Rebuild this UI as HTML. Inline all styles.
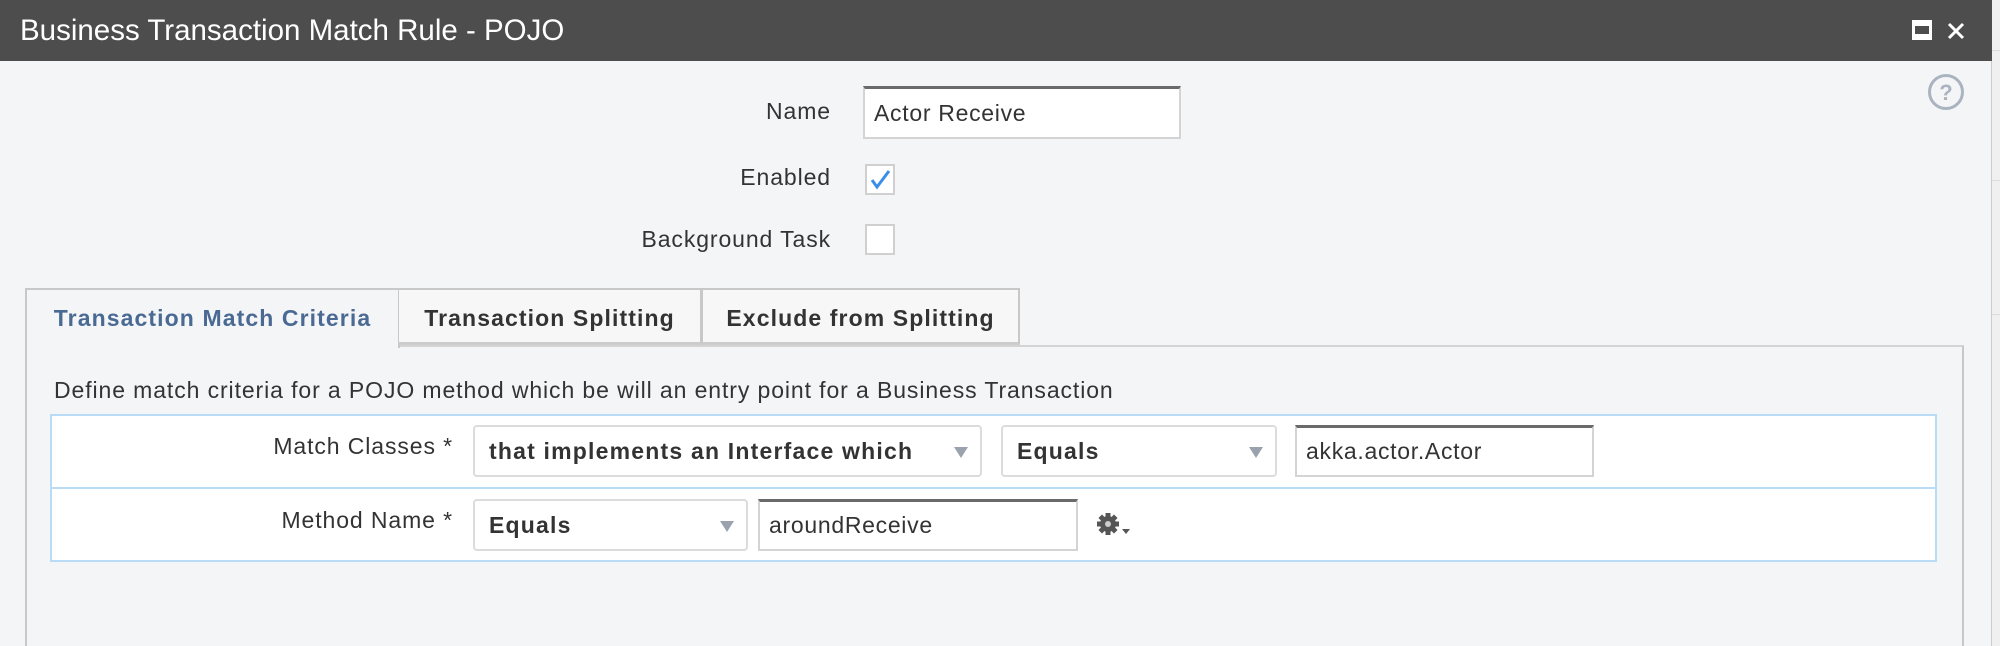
<!DOCTYPE html>
<html><head><meta charset="utf-8"><style>
*{box-sizing:border-box;margin:0;padding:0}
body{width:2000px;height:646px;overflow:hidden;background:#f0f0f0;font-family:"Liberation Sans",sans-serif;color:#333;position:relative}
.abs{position:absolute}
#dlg{left:0;top:0;width:1992px;height:646px;background:#f4f5f7;border-right:1px solid #ccc}
#title{left:0;top:0;width:1992px;height:61px;background:#4d4d4d;color:#fff;font-size:29.5px;line-height:61px;padding-left:20px;letter-spacing:0px}
.lbl{font-size:23px;letter-spacing:0.9px;color:#333;text-align:right;line-height:30px}
.inp{background:#fff;border:2px solid #d4d4d4;border-top:3px solid #6a6a6a;font-size:23px;letter-spacing:0.7px;padding-left:9px;color:#333}
.cb{background:#fff;border:2px solid #d0d0d0;width:30px;height:31px}
.tab{top:288px;height:57px;border:2px solid #c8c8c8;border-bottom:none;font-size:23px;letter-spacing:1.1px;font-weight:bold;text-align:center;line-height:57px;background:#f7f7f7;color:#333}
.sel{background:#fff;border:2px solid #dcdcdc;border-radius:4px;height:52px;font-size:23px;letter-spacing:1.2px;font-weight:bold;line-height:48px;padding-left:14px;color:#333}
.sel:after{content:"";position:absolute;right:12px;top:20px;border-left:7px solid transparent;border-right:7px solid transparent;border-top:11px solid #9aa3ad}
.row{left:50px;width:1887px;background:#fff;border:2px solid #b8dcf6}
</style></head><body>
<div class="abs" style="left:1992px;top:50px;width:8px;height:1px;background:#ddd"></div>
<div class="abs" style="left:1992px;top:180px;width:8px;height:1px;background:#ddd"></div>
<div class="abs" style="left:1992px;top:314px;width:8px;height:1px;background:#ddd"></div>
<div class="abs" id="dlg"></div>
<div class="abs" id="title">Business Transaction Match Rule - POJO</div>
<div class="abs" style="left:1912px;top:20px;width:20px;height:20px;background:#fff"><div style="position:absolute;left:3px;top:6px;width:14px;height:8px;background:#4d4d4d"></div></div>
<svg class="abs" style="left:1946px;top:21px" width="20" height="20"><path d="M3 3L17 17M17 3L3 17" stroke="#fff" stroke-width="3"/></svg>
<svg class="abs" style="left:1927px;top:73px" width="38" height="38"><circle cx="19" cy="19" r="16.5" fill="none" stroke="#aab4c0" stroke-width="3"/><text x="19" y="27" font-size="22" font-weight="bold" fill="#aab4c0" text-anchor="middle" font-family="Liberation Sans">?</text></svg>

<div class="abs lbl" style="left:400px;width:431px;top:96px">Name</div>
<div class="abs inp" style="left:863px;top:86px;width:318px;height:53px;line-height:48px">Actor Receive</div>
<div class="abs lbl" style="left:400px;width:431px;top:162px">Enabled</div>
<div class="abs cb" style="left:865px;top:164px"><svg width="26" height="27"><path d="M5 14L10 21L22 5" fill="none" stroke="#3b8ee8" stroke-width="3"/></svg></div>
<div class="abs lbl" style="left:400px;width:431px;top:224px">Background Task</div>
<div class="abs cb" style="left:865px;top:224px"></div>

<div class="abs" style="left:25px;top:345px;width:1939px;height:301px;border-left:2px solid #c8c8c8;border-right:2px solid #c8c8c8;border-top:2px solid #d4d4d4"></div>
<div class="abs tab" style="left:25px;width:375px;background:#f4f5f7;color:#4a6a94;height:60px">Transaction Match Criteria</div>
<div class="abs tab" style="left:399px;width:303px;border-left:none;border-bottom:3px solid #ccc">Transaction Splitting</div>
<div class="abs tab" style="left:701px;width:319px;border-left:2px solid #c8c8c8;border-bottom:3px solid #ccc">Exclude from Splitting</div>

<div class="abs" style="left:54px;top:375px;font-size:23px;letter-spacing:0.9px;color:#333;line-height:30px;white-space:nowrap">Define match criteria for a POJO method which be will an entry point for a Business Transaction</div>

<div class="abs row" style="top:414px;height:75px"></div>
<div class="abs row" style="top:487px;height:75px"></div>
<div class="abs lbl" style="left:150px;width:303px;top:431px">Match Classes *</div>
<div class="abs sel" style="left:473px;top:425px;width:509px">that implements an Interface which</div>
<div class="abs sel" style="left:1001px;top:425px;width:276px">Equals</div>
<div class="abs inp" style="left:1295px;top:425px;width:299px;height:52px;line-height:46px">akka.actor.Actor</div>
<div class="abs lbl" style="left:150px;width:303px;top:505px">Method Name *</div>
<div class="abs sel" style="left:473px;top:499px;width:275px">Equals</div>
<div class="abs inp" style="left:758px;top:499px;width:320px;height:52px;line-height:46px">aroundReceive</div>
<svg class="abs" style="left:1095px;top:511px" width="40" height="28"><g transform="translate(13,13)" fill="#555"><circle r="8"/><rect x="-2.5" y="-11" width="5" height="22"/><rect x="-11" y="-2.5" width="22" height="5"/><rect x="-2.5" y="-11" width="5" height="22" transform="rotate(45)"/><rect x="-2.5" y="-11" width="5" height="22" transform="rotate(-45)"/><circle r="3" fill="#ccc"/></g><path d="M27 18L35 18L31 23Z" fill="#555"/></svg>
</body></html>
